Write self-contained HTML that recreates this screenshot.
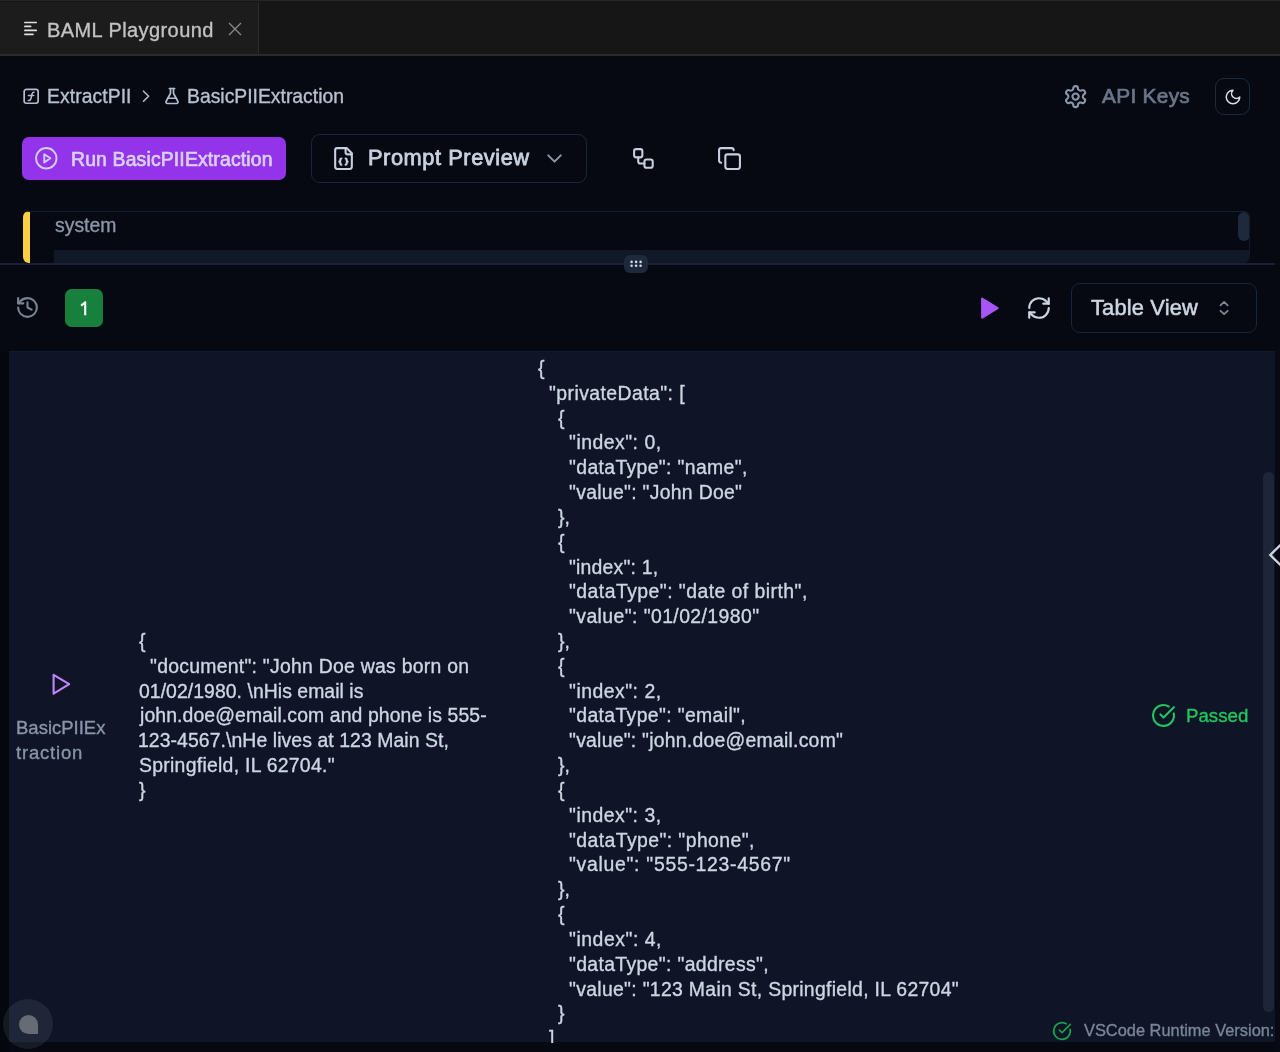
<!DOCTYPE html>
<html><head><meta charset="utf-8">
<style>
*{margin:0;padding:0;box-sizing:border-box}
html,body{width:1280px;height:1052px;overflow:hidden;background:#060912;font-family:"Liberation Sans",sans-serif;}
.abs{position:absolute}
svg{position:absolute;overflow:visible}
.j{position:absolute;white-space:pre;font-size:19.4px;line-height:24.82px;color:#cdd6e3;will-change:transform;-webkit-text-stroke:0.35px currentColor}
.t{position:absolute;white-space:pre;line-height:1;will-change:transform;-webkit-text-stroke:0.35px currentColor}
</style></head><body>
<!-- tab bar -->
<div class="abs" style="left:0;top:0;width:1280px;height:56px;background:#161616;border-top:1.5px solid #262626;border-bottom:2px solid #2a2a2a"></div>
<div class="abs" style="left:0;top:1.5px;width:258.5px;height:52.5px;background:#1c1c1c;border-right:1.5px solid #2c2c2c"></div>
<svg style="left:0;top:0" width="60" height="50"><g stroke="#e0e0e0" stroke-width="1.7" stroke-linecap="round"><path d="M24.9 22.5H36.2M24.9 26.4H30.6M24.9 30.4H36.2M24.9 34.3H33"/></g></svg>
<div class="t" style="left:46.6px;top:20.2px;font-size:20px;letter-spacing:0.42px;color:#c2c2c2">BAML Playground</div>
<svg style="left:228px;top:22px" width="14" height="14" viewBox="0 0 14 14"><path d="M1 1L13 13M13 1L1 13" stroke="#8a8a8a" stroke-width="1.3"/></svg>

<!-- breadcrumb -->
<svg style="left:22px;top:87px" width="18" height="18" viewBox="0 0 18 18"><rect x="2.15" y="2.45" width="14" height="13.8" rx="2.2" fill="none" stroke="#b4bccb" stroke-width="1.7"/><path d="M6.3 13.4c1.2.3 2.2-.2 2.6-1.6L10 6.9c.3-1.1 1-1.7 2-1.6M6.4 8.6h5.3" fill="none" stroke="#b4bccb" stroke-width="1.5" stroke-linecap="round"/></svg>
<div class="t" style="left:47px;top:87px;font-size:19.3px;letter-spacing:0.1px;color:#b8c0cf">ExtractPII</div>
<svg style="left:140.8px;top:89px" width="10" height="14" viewBox="0 0 10 14"><path d="M2.5 2.2L7.6 7.2L2.5 12.2" fill="none" stroke="#b4bccb" stroke-width="1.6" stroke-linecap="round" stroke-linejoin="round"/></svg>
<svg style="left:162.6px;top:87px" width="18" height="18" viewBox="0 0 24 24" fill="none" stroke="#b4bccb" stroke-width="2.3" stroke-linecap="round" stroke-linejoin="round"><path d="M14 2v6a2 2 0 0 0 .245.96l5.51 10.08A2 2 0 0 1 18 22H6a2 2 0 0 1-1.755-2.96l5.51-10.08A2 2 0 0 0 10 8V2"/><path d="M6.453 15h11.094"/><path d="M8.5 2h7"/></svg>
<div class="t" style="left:187px;top:87px;font-size:19.35px;color:#b8c0cf">BasicPIIExtraction</div>

<!-- api keys -->
<svg style="left:1063.4px;top:83.6px" width="25.2" height="25.2" viewBox="0 0 24 24" fill="none" stroke="#8a97ab" stroke-width="2" stroke-linecap="round" stroke-linejoin="round"><path d="M12.22 2h-.44a2 2 0 0 0-2 2v.18a2 2 0 0 1-1 1.73l-.43.25a2 2 0 0 1-2 0l-.15-.08a2 2 0 0 0-2.73.73l-.22.38a2 2 0 0 0 .73 2.73l.15.1a2 2 0 0 1 1 1.72v.51a2 2 0 0 1-1 1.74l-.15.09a2 2 0 0 0-.73 2.73l.22.38a2 2 0 0 0 2.73.73l.15-.08a2 2 0 0 1 2 0l.43.25a2 2 0 0 1 1 1.73V20a2 2 0 0 0 2 2h.44a2 2 0 0 0 2-2v-.18a2 2 0 0 1 1-1.73l.43-.25a2 2 0 0 1 2 0l.15.08a2 2 0 0 0 2.73-.73l.22-.39a2 2 0 0 0-.73-2.73l-.15-.08a2 2 0 0 1-1-1.74v-.5a2 2 0 0 1 1-1.74l.15-.09a2 2 0 0 0 .73-2.73l-.22-.38a2 2 0 0 0-2.73-.73l-.15.08a2 2 0 0 1-2 0l-.43-.25a2 2 0 0 1-1-1.73V4a2 2 0 0 0-2-2z"/><circle cx="12" cy="12" r="3"/></svg>
<div class="t" style="left:1102px;top:85.8px;font-size:20.8px;letter-spacing:0.32px;-webkit-text-stroke:0.7px currentColor;color:#6b7689">API Keys</div>
<div class="abs" style="left:1215px;top:77.8px;width:35px;height:37px;border:1.8px solid #1e293b;border-radius:9px"></div>
<svg style="left:1223.5px;top:87.5px" width="18" height="18" viewBox="0 0 24 24" fill="none" stroke="#d8dee8" stroke-width="2" stroke-linecap="round" stroke-linejoin="round"><path d="M12 3a6 6 0 0 0 9 9 9 9 0 1 1-9-9Z"/></svg>

<!-- run button -->
<div class="abs" style="left:22px;top:137px;width:264px;height:43px;background:#9333ea;border-radius:7px"></div>
<svg style="left:34.1px;top:145.6px" width="24.6" height="24.6" viewBox="0 0 24 24" fill="none" stroke="#d4cdea" stroke-width="1.85" stroke-linecap="round" stroke-linejoin="round"><circle cx="12" cy="12" r="10"/><polygon points="10 8 16 12 10 16 10 8"/></svg>
<div class="t" style="left:71px;top:149.6px;font-size:19.4px;letter-spacing:0.15px;-webkit-text-stroke:0.7px currentColor;color:#d8d0ee">Run BasicPIIExtraction</div>

<!-- prompt preview -->
<div class="abs" style="left:311px;top:133.6px;width:276px;height:49.2px;border:1.9px solid #1c2638;border-radius:9px"></div>
<svg style="left:331px;top:146px" width="25" height="25" viewBox="0 0 24 24" fill="none" stroke="#c8d0e0" stroke-width="2" stroke-linecap="round" stroke-linejoin="round"><path d="M15 2H6a2 2 0 0 0-2 2v16a2 2 0 0 0 2 2h12a2 2 0 0 0 2-2V7Z"/><path d="M14 2v4a2 2 0 0 0 2 2h4"/><path d="M10 12a1 1 0 0 0-1 1v1a1 1 0 0 1-1 1 1 1 0 0 1 1 1v1a1 1 0 0 0 1 1"/><path d="M14 18a1 1 0 0 0 1-1v-1a1 1 0 0 1 1-1 1 1 0 0 1-1-1v-1a1 1 0 0 0-1-1"/></svg>
<div class="t" style="left:367.9px;top:147px;font-size:21.8px;letter-spacing:0.56px;-webkit-text-stroke:0.8px currentColor;color:#c9d1df">Prompt Preview</div>
<svg style="left:542px;top:145.5px" width="25" height="25" viewBox="0 0 24 24" fill="none" stroke="#8b94a3" stroke-width="2" stroke-linecap="round" stroke-linejoin="round"><path d="m6 9 6 6 6-6"/></svg>

<svg style="left:630.6px;top:145.8px" width="24.8" height="24.8" viewBox="0 0 24 24" fill="none" stroke="#c8d0e0" stroke-width="2" stroke-linecap="round" stroke-linejoin="round"><rect width="8" height="8" x="3" y="3" rx="2"/><path d="M7 11v4a2 2 0 0 0 2 2h4"/><rect width="8" height="8" x="13" y="13" rx="2"/></svg>
<svg style="left:717px;top:146px" width="25" height="25" viewBox="0 0 24 24" fill="none" stroke="#c8d0e0" stroke-width="2" stroke-linecap="round" stroke-linejoin="round"><rect width="14" height="14" x="8" y="8" rx="2" ry="2"/><path d="M4 16c-1.1 0-2-.9-2-2V4c0-1.1.9-2 2-2h10c1.1 0 2 .9 2 2"/></svg>

<!-- prompt box -->
<div class="abs" style="left:23px;top:211px;width:1227px;height:52px;border-top:1.5px solid #172033;border-right:1px solid #111827;border-left:7px solid #f8cf45;border-radius:6px 6px 6px 6px;overflow:hidden">
  <div class="abs" style="left:24px;top:37.5px;width:1220px;height:13px;background:#111827"></div>
  <div class="abs" style="right:-0.5px;top:0px;width:11.5px;height:28.5px;background:#1e293b;border-radius:6px"></div>
</div>
<div class="t" style="left:55px;top:216px;font-size:19.4px;color:#8c96a8">system</div>
<div class="abs" style="left:0;top:263px;width:1275px;height:2px;background:#1a2232"></div>
<div class="abs" style="left:624px;top:255px;width:24px;height:18px;background:#1e293b;border-radius:6px"></div>
<svg style="left:624px;top:255px" width="24" height="18"><g fill="#d2d8e3"><circle cx="7.6" cy="6.9" r="1.3"/><circle cx="12.1" cy="6.9" r="1.3"/><circle cx="16.6" cy="6.9" r="1.3"/><circle cx="7.6" cy="10.75" r="1.3"/><circle cx="12.1" cy="10.75" r="1.3"/><circle cx="16.6" cy="10.75" r="1.3"/></g></svg>

<!-- toolbar -->
<svg style="left:15px;top:295.1px" width="25" height="25" viewBox="0 0 24 24" fill="none" stroke="#7b8592" stroke-width="2" stroke-linecap="round" stroke-linejoin="round"><path d="M3 12a9 9 0 1 0 9-9 9.75 9.75 0 0 0-6.74 2.74L3 8"/><path d="M3 3v5h5"/><path d="M12 7v5l4 2"/></svg>
<div class="abs" style="left:65px;top:289px;width:37.5px;height:38px;background:#17803d;border-radius:6.5px"></div>
<svg style="left:0;top:0" width="110" height="330"><path d="M81.2 305.6L85.2 302.2V315.2" fill="none" stroke="#ffffff" stroke-width="2.1" stroke-linejoin="round"/></svg>
<svg style="left:0;top:0" width="1010" height="330"><polygon points="982.2 298.7 997.6 308.1 982.2 317.5" fill="#a855f7" stroke="#a855f7" stroke-width="2.2" stroke-linejoin="round"/></svg>
<svg style="left:1026px;top:295px" width="26" height="26" viewBox="0 0 24 24" fill="none" stroke="#cbd5e1" stroke-width="2" stroke-linecap="round" stroke-linejoin="round"><path d="M3 12a9 9 0 0 1 9-9 9.75 9.75 0 0 1 6.74 2.74L21 8"/><path d="M21 3v5h-5"/><path d="M21 12a9 9 0 0 1-9 9 9.75 9.75 0 0 1-6.74-2.74L3 16"/><path d="M8 16H3v5"/></svg>
<div class="abs" style="left:1070.7px;top:283px;width:186px;height:49.8px;border:1.9px solid #1c2638;border-radius:9px"></div>
<div class="t" style="left:1090.8px;top:297.3px;font-size:21.9px;letter-spacing:0.15px;-webkit-text-stroke:0.55px currentColor;color:#cdd5e1">Table View</div>
<svg style="left:0;top:0" width="1240" height="330" fill="none" stroke="#7f8796" stroke-width="1.8" stroke-linecap="round" stroke-linejoin="round"><path d="M1220.5 305.3L1224.1 301.9L1227.7 305.3M1220.5 310.8L1224.1 314.2L1227.7 310.8"/></svg>

<!-- table -->
<div class="abs" style="left:0;top:351px;width:9px;height:701px;background:#04070d"></div>
<div class="abs" style="left:9px;top:351.2px;width:1266px;height:691.3px;background:#0f1526;border-top:1.2px solid #111a2d"></div>
<div class="abs" style="left:1275px;top:351px;width:5px;height:701px;background:#070a12"></div>

<svg style="left:0;top:0" width="100" height="720" fill="none" stroke="#c084fc" stroke-width="2.1" stroke-linejoin="round"><polygon points="53.6 674.8 69.2 684.2 53.6 693.6"/></svg>
<div class="t" style="left:16px;top:716px;font-size:18.5px;line-height:24.82px;color:#8a95a8">BasicPIIEx</div>
<div class="t" style="left:16px;top:740.82px;font-size:18.5px;line-height:24.82px;color:#8a95a8;letter-spacing:0.8px">traction</div>

<div class="abs" style="left:0;top:0;width:1275px;height:1042.5px;overflow:hidden">
<div class="j" style="left:537.50px;top:356.00px;letter-spacing:0.000px">{</div>
<div class="j" style="left:548.60px;top:380.82px;letter-spacing:0.433px">"privateData": [</div>
<div class="j" style="left:558.20px;top:405.64px;letter-spacing:0.000px">{</div>
<div class="j" style="left:569.20px;top:430.46px;letter-spacing:0.500px">"index": 0,</div>
<div class="j" style="left:569.20px;top:455.28px;letter-spacing:0.356px">"dataType": "name",</div>
<div class="j" style="left:569.20px;top:480.10px;letter-spacing:0.294px">"value": "John Doe"</div>
<div class="j" style="left:558.20px;top:504.92px;letter-spacing:0.000px">},</div>
<div class="j" style="left:558.20px;top:529.74px;letter-spacing:0.000px">{</div>
<div class="j" style="left:569.20px;top:554.56px;letter-spacing:0.200px">"index": 1,</div>
<div class="j" style="left:569.20px;top:579.38px;letter-spacing:0.459px">"dataType": "date of birth",</div>
<div class="j" style="left:569.20px;top:604.20px;letter-spacing:0.415px">"value": "01/02/1980"</div>
<div class="j" style="left:558.20px;top:629.02px;letter-spacing:0.000px">},</div>
<div class="j" style="left:558.20px;top:653.84px;letter-spacing:0.000px">{</div>
<div class="j" style="left:569.20px;top:678.66px;letter-spacing:0.500px">"index": 2,</div>
<div class="j" style="left:569.20px;top:703.48px;letter-spacing:0.363px">"dataType": "email",</div>
<div class="j" style="left:569.20px;top:728.30px;letter-spacing:0.243px">"value": "john.doe@email.com"</div>
<div class="j" style="left:558.20px;top:753.12px;letter-spacing:0.000px">},</div>
<div class="j" style="left:558.20px;top:777.94px;letter-spacing:0.000px">{</div>
<div class="j" style="left:569.20px;top:802.76px;letter-spacing:0.500px">"index": 3,</div>
<div class="j" style="left:569.20px;top:827.58px;letter-spacing:0.421px">"dataType": "phone",</div>
<div class="j" style="left:569.20px;top:852.40px;letter-spacing:0.714px">"value": "555-123-4567"</div>
<div class="j" style="left:558.20px;top:877.22px;letter-spacing:0.000px">},</div>
<div class="j" style="left:558.20px;top:902.04px;letter-spacing:0.000px">{</div>
<div class="j" style="left:569.20px;top:926.86px;letter-spacing:0.540px">"index": 4,</div>
<div class="j" style="left:569.20px;top:951.68px;letter-spacing:0.343px">"dataType": "address",</div>
<div class="j" style="left:569.20px;top:976.50px;letter-spacing:0.309px">"value": "123 Main St, Springfield, IL 62704"</div>
<div class="j" style="left:558.20px;top:1001.32px;letter-spacing:0.000px">}</div>
<div class="j" style="left:549.30px;top:1026.14px;letter-spacing:0.000px">]</div>
<div class="j" style="left:537.50px;top:1050.96px;letter-spacing:0.000px">}</div>
<div class="j" style="left:138.70px;top:629.00px;letter-spacing:0.000px">{</div>
<div class="j" style="left:149.50px;top:653.82px;letter-spacing:0.262px">"document": "John Doe was born on</div>
<div class="j" style="left:138.80px;top:678.64px;letter-spacing:0.052px">01/02/1980. \nHis email is</div>
<div class="j" style="left:139.70px;top:703.46px;letter-spacing:0.103px">john.doe@email.com and phone is 555-</div>
<div class="j" style="left:138.00px;top:728.28px;letter-spacing:0.076px">123-4567.\nHe lives at 123 Main St,</div>
<div class="j" style="left:138.60px;top:753.10px;letter-spacing:0.277px">Springfield, IL 62704."</div>
<div class="j" style="left:138.70px;top:777.92px;letter-spacing:0.000px">}</div>
</div>

<svg style="left:1151px;top:703px" width="25" height="25" viewBox="0 0 24 24" fill="none" stroke="#22c55e" stroke-width="2" stroke-linecap="round" stroke-linejoin="round"><path d="M21.801 10A10 10 0 1 1 17 3.335"/><path d="m9 11 3 3L22 4"/></svg>
<div class="t" style="left:1186px;top:707px;font-size:18.7px;color:#22c55e">Passed</div>

<div class="abs" style="left:1263px;top:472px;width:11px;height:540px;background:#1c2638;border-radius:6px"></div>
<svg style="left:1260px;top:540px" width="20" height="30" viewBox="0 0 20 30"><path d="M22 3.5L10.3 15L22 26.5" fill="none" stroke="#cbd5e1" stroke-width="2.4"/></svg>

<svg style="left:1051.7px;top:1020.5px" width="20" height="20" viewBox="0 0 24 24" fill="none" stroke="#16a34a" stroke-width="2" stroke-linecap="round" stroke-linejoin="round"><path d="M21.801 10A10 10 0 1 1 17 3.335"/><path d="m9 11 3 3L22 4"/></svg>
<div class="t" style="left:1084px;top:1022px;font-size:16.4px;color:#7a8599">VSCode Runtime Version:</div>

<div class="abs" style="left:3px;top:999px;width:50px;height:50px;border-radius:50%;background:rgba(200,210,230,0.09)"></div>
<div class="abs" style="left:18.6px;top:1014.6px;width:19px;height:19px;background:#676b75;border-radius:50% 50% 0 50%"></div>
</body></html>
